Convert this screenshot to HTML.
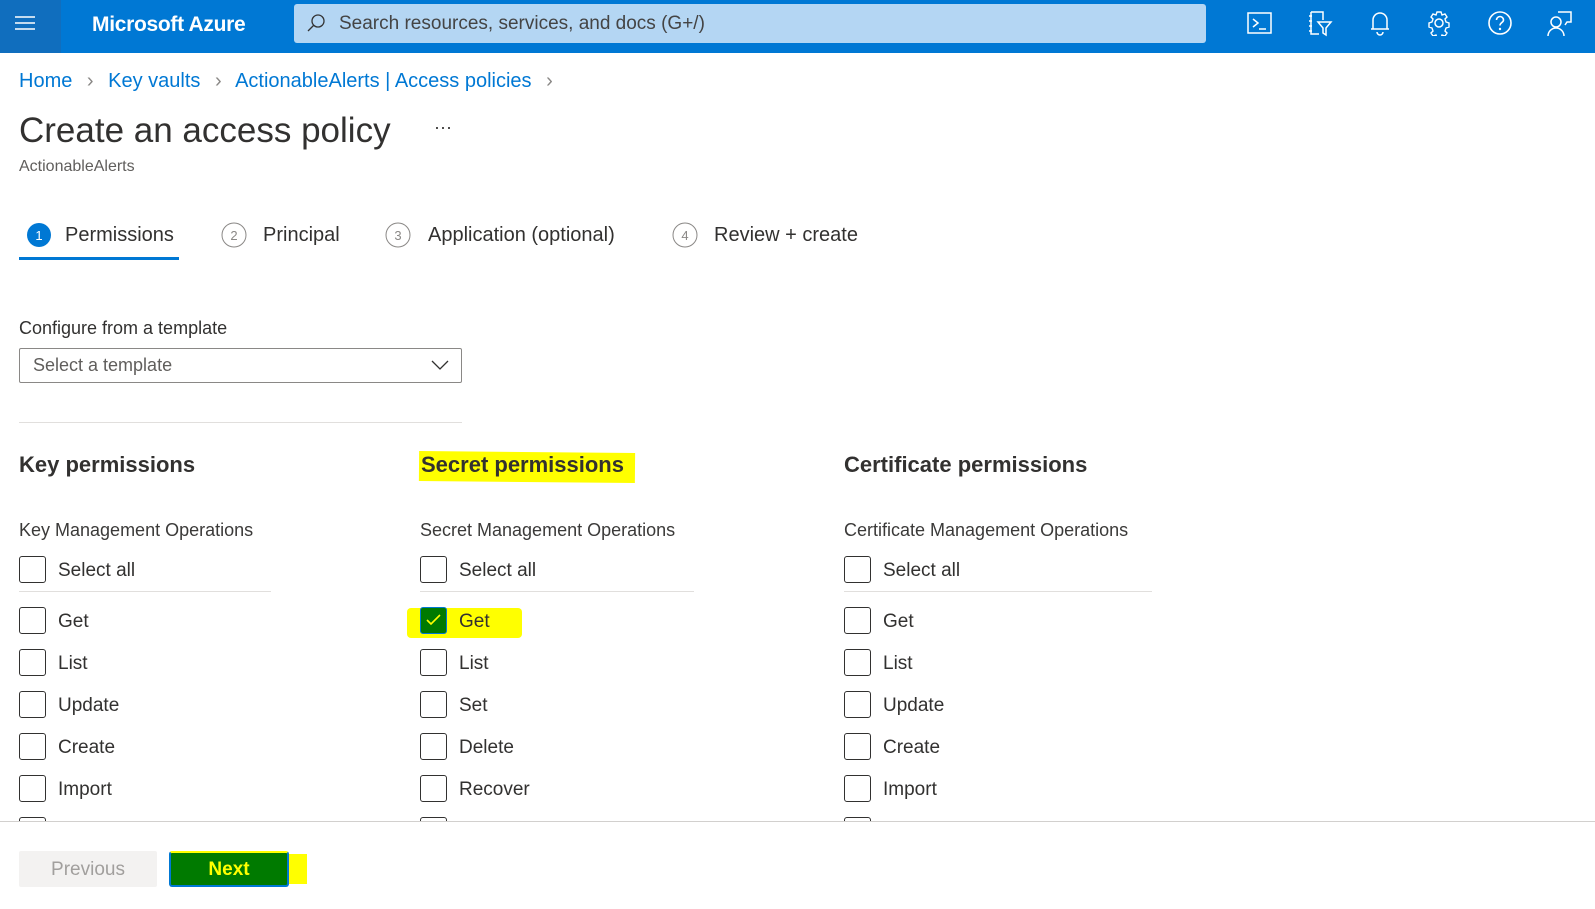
<!DOCTYPE html>
<html><head><meta charset="utf-8"><style>
*{margin:0;padding:0;box-sizing:border-box}
body{width:1595px;height:909px;overflow:hidden;background:#fff;font-family:"Liberation Sans",sans-serif;color:#323130;position:relative}
.a{position:absolute;white-space:nowrap}
.hdr{left:0;top:0;width:1595px;height:53px;background:#0078d4}
.ham{left:0;top:0;width:61px;height:53px;background:#106ebe}
.cb{position:absolute;width:27px;height:27px;border:1.5px solid #323130;border-radius:3px;background:#fff}
.lbl{position:absolute;font-size:19px;color:#323130}
.ic{position:absolute;top:10px}
</style></head><body>
<div class="a hdr"></div>
<div class="a ham"><svg width="61" height="53"><g stroke="#fff" stroke-width="1.6"><line x1="15" y1="17" x2="35" y2="17"/><line x1="15" y1="23" x2="35" y2="23"/><line x1="15" y1="29" x2="35" y2="29"/></g></svg></div>
<div class="a" style="left:92px;top:13px;font-size:21px;font-weight:bold;color:#fff;letter-spacing:-0.3px">Microsoft Azure</div>
<div class="a" style="left:294px;top:4px;width:912px;height:39px;background:#b4d6f3;border-radius:3px"></div>
<svg class="a" style="left:305px;top:12px" width="22" height="22"><circle cx="13" cy="9" r="6" fill="none" stroke="#333" stroke-width="1.3"/><line x1="9" y1="13" x2="3" y2="19" stroke="#333" stroke-width="1.3"/></svg>
<div class="a" style="left:339px;top:13px;font-size:19px;color:#444">Search resources, services, and docs (G+/)</div>
<svg class="ic" style="left:1247px" width="26" height="26"><rect x="1" y="3" width="23" height="20" fill="none" stroke="#fff" stroke-width="1.5"/><path d="M6 9l5 4-5 4M12 19h7" fill="none" stroke="#fff" stroke-width="1.5"/></svg>
<svg class="ic" style="left:1307px" width="26" height="28"><path d="M4 2h12v8M4 2v22h8M2 6h3M2 11h3M2 16h3M2 21h3" fill="none" stroke="#fff" stroke-width="1.5"/><path d="M11 12h13l-5 6v7l-3-2v-5z" fill="none" stroke="#fff" stroke-width="1.5"/></svg>
<svg class="ic" style="left:1368px" width="24" height="26"><path d="M5 19V10a7 7 0 0114 0v9zM3 19h18M9 22a3 3 0 006 0" fill="none" stroke="#fff" stroke-width="1.5"/></svg>
<svg class="ic" style="left:1426px" width="26" height="26"><circle cx="13" cy="13" r="4" fill="none" stroke="#fff" stroke-width="1.5"/><path d="M11 2h4l1 3 3-1 2 3-2 2 1 3 3 1v4l-3 1-1 3 2 2-2 3-3-1-1 3h-4l-1-3-3 1-2-3 2-2-1-3-3-1v-4l3-1 1-3-2-2 2-3 3 1z" fill="none" stroke="#fff" stroke-width="1.4"/></svg>
<svg class="ic" style="left:1487px" width="26" height="26"><circle cx="13" cy="13" r="11" fill="none" stroke="#fff" stroke-width="1.6"/><path d="M9.5 10a3.5 3.5 0 117 0c0 2.5-3.5 2.5-3.5 5.5" fill="none" stroke="#fff" stroke-width="1.6"/><circle cx="13" cy="19" r="1.2" fill="#fff"/></svg>
<svg class="ic" style="left:1546px" width="28" height="28"><circle cx="10" cy="12" r="5" fill="none" stroke="#fff" stroke-width="1.5"/><path d="M2 26a8 8 0 0116 0M12 2h13v10h-4l-2 3" fill="none" stroke="#fff" stroke-width="1.5"/></svg>

<div class="a" style="left:19px;top:70px;font-size:20px;color:#0078d4">Home <span style="color:#8a8886;margin:0 9px">&#8250;</span> Key vaults <span style="color:#8a8886;margin:0 9px">&#8250;</span> ActionableAlerts | Access policies <span style="color:#8a8886;margin:0 9px">&#8250;</span></div>
<div class="a" style="left:19px;top:111px;font-size:35px;color:#323130">Create an access policy</div>
<div class="a" style="left:434px;top:117px;font-size:18px;color:#323130">···</div>
<div class="a" style="left:19px;top:158px;font-size:16px;color:#605e5c">ActionableAlerts</div>

<svg class="a" style="left:26px;top:222px" width="26" height="26"><circle cx="13" cy="13" r="12" fill="#0078d4"/><text x="13" y="18" text-anchor="middle" font-size="13" fill="#fff" font-family="Liberation Sans">1</text></svg>
<div class="a" style="left:65px;top:224px;font-size:20px;color:#323130">Permissions</div>
<div class="a" style="left:19px;top:257px;width:160px;height:3px;background:#0078d4"></div>
<svg class="a" style="left:221px;top:222px" width="26" height="26"><circle cx="13" cy="13" r="12" fill="none" stroke="#8a8886"/><text x="13" y="18" text-anchor="middle" font-size="13" fill="#8a8886" font-family="Liberation Sans">2</text></svg>
<div class="a" style="left:263px;top:224px;font-size:20px;color:#323130">Principal</div>
<svg class="a" style="left:385px;top:222px" width="26" height="26"><circle cx="13" cy="13" r="12" fill="none" stroke="#8a8886"/><text x="13" y="18" text-anchor="middle" font-size="13" fill="#8a8886" font-family="Liberation Sans">3</text></svg>
<div class="a" style="left:428px;top:224px;font-size:20px;color:#323130">Application (optional)</div>
<svg class="a" style="left:672px;top:222px" width="26" height="26"><circle cx="13" cy="13" r="12" fill="none" stroke="#8a8886"/><text x="13" y="18" text-anchor="middle" font-size="13" fill="#8a8886" font-family="Liberation Sans">4</text></svg>
<div class="a" style="left:714px;top:224px;font-size:20px;color:#323130">Review + create</div>

<div class="a" style="left:19px;top:318px;font-size:18px">Configure from a template</div>
<div class="a" style="left:19px;top:348px;width:443px;height:35px;border:1px solid #8a8886;border-radius:2px"></div>
<div class="a" style="left:33px;top:355px;font-size:18px;color:#605e5c">Select a template</div>
<svg class="a" style="left:431px;top:359px" width="18" height="12"><path d="M1 2l8 8 8-8" fill="none" stroke="#323130" stroke-width="1.3"/></svg>
<div class="a" style="left:19px;top:422px;width:443px;height:1px;background:#e1dfdd"></div>

<div class="a" style="left:419px;top:452px;width:216px;height:30px;background:#ffff00;transform:rotate(0.5deg)"></div>
<div class="a" style="left:19px;top:452px;font-size:22px;font-weight:bold">Key permissions</div>
<div class="a" style="left:421px;top:452px;font-size:22px;font-weight:bold">Secret permissions</div>
<div class="a" style="left:844px;top:452px;font-size:22px;font-weight:bold">Certificate permissions</div>

<div class="a" style="left:19px;top:520px;font-size:18px;color:#3b3a39">Key Management Operations</div>
<div class="a" style="left:420px;top:520px;font-size:18px;color:#3b3a39">Secret Management Operations</div>
<div class="a" style="left:844px;top:520px;font-size:18px;color:#3b3a39">Certificate Management Operations</div>

<div class="a" style="left:19px;top:591px;width:252px;height:1px;background:#e1dfdd"></div>
<div class="a" style="left:420px;top:591px;width:274px;height:1px;background:#e1dfdd"></div>
<div class="a" style="left:844px;top:591px;width:308px;height:1px;background:#e1dfdd"></div>

<div class="a" style="left:407px;top:608px;width:115px;height:30px;background:#ffff00;border-radius:4px"></div>

<div class="cb" style="left:19px;top:556px"></div><div class="lbl" style="left:58px;top:560px">Select all</div>
<div class="cb" style="left:19px;top:607px"></div><div class="lbl" style="left:58px;top:611px">Get</div>
<div class="cb" style="left:19px;top:649px"></div><div class="lbl" style="left:58px;top:653px">List</div>
<div class="cb" style="left:19px;top:691px"></div><div class="lbl" style="left:58px;top:695px">Update</div>
<div class="cb" style="left:19px;top:733px"></div><div class="lbl" style="left:58px;top:737px">Create</div>
<div class="cb" style="left:19px;top:775px"></div><div class="lbl" style="left:58px;top:779px">Import</div>
<div class="cb" style="left:19px;top:817px"></div>

<div class="cb" style="left:420px;top:556px"></div><div class="lbl" style="left:459px;top:560px">Select all</div>
<div class="cb" style="left:420px;top:607px;background:#007a00;border-color:#0078d4"><svg width="24" height="24" style="position:absolute;left:0;top:0"><path d="M6 12l4 4 9-9" fill="none" stroke="#ffff00" stroke-width="1.6"/></svg></div><div class="lbl" style="left:459px;top:611px">Get</div>
<div class="cb" style="left:420px;top:649px"></div><div class="lbl" style="left:459px;top:653px">List</div>
<div class="cb" style="left:420px;top:691px"></div><div class="lbl" style="left:459px;top:695px">Set</div>
<div class="cb" style="left:420px;top:733px"></div><div class="lbl" style="left:459px;top:737px">Delete</div>
<div class="cb" style="left:420px;top:775px"></div><div class="lbl" style="left:459px;top:779px">Recover</div>
<div class="cb" style="left:420px;top:817px"></div>

<div class="cb" style="left:844px;top:556px"></div><div class="lbl" style="left:883px;top:560px">Select all</div>
<div class="cb" style="left:844px;top:607px"></div><div class="lbl" style="left:883px;top:611px">Get</div>
<div class="cb" style="left:844px;top:649px"></div><div class="lbl" style="left:883px;top:653px">List</div>
<div class="cb" style="left:844px;top:691px"></div><div class="lbl" style="left:883px;top:695px">Update</div>
<div class="cb" style="left:844px;top:733px"></div><div class="lbl" style="left:883px;top:737px">Create</div>
<div class="cb" style="left:844px;top:775px"></div><div class="lbl" style="left:883px;top:779px">Import</div>
<div class="cb" style="left:844px;top:817px"></div>

<div class="a" style="left:0;top:821px;width:1595px;height:88px;background:#fff;border-top:1px solid #d2d0ce"></div>
<div class="a" style="left:19px;top:851px;width:138px;height:36px;background:#f3f2f1;border-radius:2px;font-size:19px;color:#a19f9d;text-align:center;line-height:38px">Previous</div>
<div class="a" style="left:258px;top:854px;width:49px;height:30px;background:#ffff00"></div>
<div class="a" style="left:169px;top:851px;width:120px;height:36px;background:#007a00;border:2px solid #0078d4;border-top-color:#ffff00;border-radius:3px;font-size:19px;font-weight:bold;color:#ffff00;text-align:center;line-height:34px">Next</div>
</body></html>
